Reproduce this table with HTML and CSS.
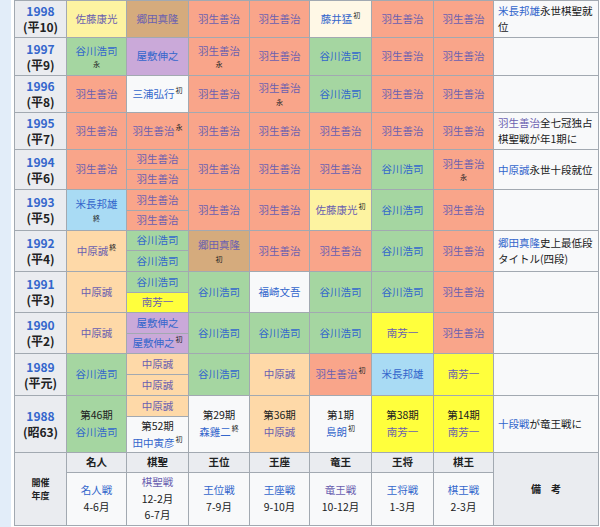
FILE: index.html
```html
<!DOCTYPE html>
<html lang="ja">
<head>
<meta charset="utf-8">
<title>タイトル保持者一覧</title>
<link rel="stylesheet" href="styles.css">
</head>
<body>
<div class="page">
  <div class="strip"></div>
  <div class="tbl">
    <!-- 1998 -->
    <div class="c yr"><a href="#">1998</a><span>(平10)</span></div>
    <div class="c st"><a class="v" href="#">佐藤康光</a></div>
    <div class="c gd"><a class="v" href="#">郷田真隆</a></div>
    <div class="c hb"><a class="v" href="#">羽生善治</a></div>
    <div class="c hb"><a class="v" href="#">羽生善治</a></div>
    <div class="c fj"><span><a href="#">藤井猛</a><sup>初</sup></span></div>
    <div class="c hb"><a class="v" href="#">羽生善治</a></div>
    <div class="c hb"><a class="v" href="#">羽生善治</a></div>
    <div class="c rm"><p><a href="#">米長邦雄</a>永世棋聖就<br>位</p></div>
    <!-- 1997 -->
    <div class="c yr"><a href="#">1997</a><span>(平9)</span></div>
    <div class="c tg"><a href="#">谷川浩司</a><small>永</small></div>
    <div class="c ys"><a href="#">屋敷伸之</a></div>
    <div class="c hb"><a class="v" href="#">羽生善治</a><small>永</small></div>
    <div class="c hb"><a class="v" href="#">羽生善治</a></div>
    <div class="c tg"><a href="#">谷川浩司</a></div>
    <div class="c hb"><a class="v" href="#">羽生善治</a></div>
    <div class="c hb"><a class="v" href="#">羽生善治</a></div>
    <div class="c rm"></div>
    <!-- 1996 -->
    <div class="c yr"><a href="#">1996</a><span>(平8)</span></div>
    <div class="c hb"><a class="v" href="#">羽生善治</a></div>
    <div class="c wh"><span><a href="#">三浦弘行</a><sup>初</sup></span></div>
    <div class="c hb"><a class="v" href="#">羽生善治</a></div>
    <div class="c hb"><a class="v" href="#">羽生善治</a><small>永</small></div>
    <div class="c tg"><a href="#">谷川浩司</a></div>
    <div class="c hb"><a class="v" href="#">羽生善治</a></div>
    <div class="c hb"><a class="v" href="#">羽生善治</a></div>
    <div class="c rm"></div>
    <!-- 1995 -->
    <div class="c yr"><a href="#">1995</a><span>(平7)</span></div>
    <div class="c hb"><a class="v" href="#">羽生善治</a></div>
    <div class="c hb"><span><a class="v" href="#">羽生善治</a><sup>永</sup></span></div>
    <div class="c hb"><a class="v" href="#">羽生善治</a></div>
    <div class="c hb"><a class="v" href="#">羽生善治</a></div>
    <div class="c hb"><a class="v" href="#">羽生善治</a></div>
    <div class="c hb"><a class="v" href="#">羽生善治</a></div>
    <div class="c hb"><a class="v" href="#">羽生善治</a></div>
    <div class="c rm"><p><a class="v" href="#">羽生善治</a>全七冠独占<br>棋聖戦が年1期に</p></div>
    <!-- 1994 -->
    <div class="c yr s2"><a href="#">1994</a><span>(平6)</span></div>
    <div class="c hb s2"><a class="v" href="#">羽生善治</a></div>
    <div class="c hb"><a class="v" href="#">羽生善治</a></div>
    <div class="c hb s2"><a class="v" href="#">羽生善治</a></div>
    <div class="c hb s2"><a class="v" href="#">羽生善治</a></div>
    <div class="c hb s2"><a class="v" href="#">羽生善治</a></div>
    <div class="c tg s2"><a href="#">谷川浩司</a></div>
    <div class="c hb s2"><a class="v" href="#">羽生善治</a><small>永</small></div>
    <div class="c rm s2"><p><a href="#">中原誠</a>永世十段就位</p></div>
    <div class="c hb"><a class="v" href="#">羽生善治</a></div>
    <!-- 1993 -->
    <div class="c yr s2"><a href="#">1993</a><span>(平5)</span></div>
    <div class="c yn s2"><a href="#">米長邦雄</a><small>終</small></div>
    <div class="c hb"><a class="v" href="#">羽生善治</a></div>
    <div class="c hb s2"><a class="v" href="#">羽生善治</a></div>
    <div class="c hb s2"><a class="v" href="#">羽生善治</a></div>
    <div class="c st s2"><span><a class="v" href="#">佐藤康光</a><sup>初</sup></span></div>
    <div class="c tg s2"><a href="#">谷川浩司</a></div>
    <div class="c hb s2"><a class="v" href="#">羽生善治</a></div>
    <div class="c rm s2"></div>
    <div class="c hb"><a class="v" href="#">羽生善治</a></div>
    <!-- 1992 -->
    <div class="c yr s2"><a href="#">1992</a><span>(平4)</span></div>
    <div class="c nk s2"><span><a class="v" href="#">中原誠</a><sup>終</sup></span></div>
    <div class="c tg"><a href="#">谷川浩司</a></div>
    <div class="c gd s2"><a class="v" href="#">郷田真隆</a><small>初</small></div>
    <div class="c hb s2"><a class="v" href="#">羽生善治</a></div>
    <div class="c hb s2"><a class="v" href="#">羽生善治</a></div>
    <div class="c tg s2"><a href="#">谷川浩司</a></div>
    <div class="c hb s2"><a class="v" href="#">羽生善治</a></div>
    <div class="c rm s2"><p><a href="#">郷田真隆</a>史上最低段<br>タイトル(四段)</p></div>
    <div class="c tg"><a href="#">谷川浩司</a></div>
    <!-- 1991 -->
    <div class="c yr s2"><a href="#">1991</a><span>(平3)</span></div>
    <div class="c nk s2"><a class="v" href="#">中原誠</a></div>
    <div class="c tg"><a href="#">谷川浩司</a></div>
    <div class="c tg s2"><a href="#">谷川浩司</a></div>
    <div class="c wh s2"><a href="#">福崎文吾</a></div>
    <div class="c tg s2"><a href="#">谷川浩司</a></div>
    <div class="c tg s2"><a href="#">谷川浩司</a></div>
    <div class="c hb s2"><a class="v" href="#">羽生善治</a></div>
    <div class="c rm s2"></div>
    <div class="c mn"><a class="v" href="#">南芳一</a></div>
    <!-- 1990 -->
    <div class="c yr s2"><a href="#">1990</a><span>(平2)</span></div>
    <div class="c nk s2"><a class="v" href="#">中原誠</a></div>
    <div class="c ys"><a href="#">屋敷伸之</a></div>
    <div class="c tg s2"><a href="#">谷川浩司</a></div>
    <div class="c tg s2"><a href="#">谷川浩司</a></div>
    <div class="c tg s2"><a href="#">谷川浩司</a></div>
    <div class="c mn s2"><a class="v" href="#">南芳一</a></div>
    <div class="c hb s2"><a class="v" href="#">羽生善治</a></div>
    <div class="c rm s2"></div>
    <div class="c ys"><span><a href="#">屋敷伸之</a><sup>初</sup></span></div>
    <!-- 1989 -->
    <div class="c yr s2"><a href="#">1989</a><span>(平元)</span></div>
    <div class="c tg s2"><a href="#">谷川浩司</a></div>
    <div class="c nk"><a class="v" href="#">中原誠</a></div>
    <div class="c tg s2"><a href="#">谷川浩司</a></div>
    <div class="c nk s2"><a class="v" href="#">中原誠</a></div>
    <div class="c hb s2"><span><a class="v" href="#">羽生善治</a><sup>初</sup></span></div>
    <div class="c yn s2"><a href="#">米長邦雄</a></div>
    <div class="c mn s2"><a class="v" href="#">南芳一</a></div>
    <div class="c rm s2"></div>
    <div class="c nk"><a class="v" href="#">中原誠</a></div>
    <!-- 1988 -->
    <div class="c yr s2"><a href="#">1988</a><span>(昭63)</span></div>
    <div class="c tg s2"><span>第46期</span><a href="#">谷川浩司</a></div>
    <div class="c nk"><a class="v" href="#">中原誠</a></div>
    <div class="c wh s2"><span>第29期</span><span><a href="#">森雞二</a><sup>終</sup></span></div>
    <div class="c nk s2"><span>第36期</span><a class="v" href="#">中原誠</a></div>
    <div class="c wh s2"><span>第1期</span><span><a href="#">島朗</a><sup>初</sup></span></div>
    <div class="c mn s2"><span>第38期</span><a class="v" href="#">南芳一</a></div>
    <div class="c mn s2"><span>第14期</span><a class="v" href="#">南芳一</a></div>
    <div class="c rm s2"><p><a href="#">十段戦</a>が竜王戦に</p></div>
    <div class="c wh"><span>第52期</span><span><a href="#">田中寅彦</a><sup>初</sup></span></div>
    <!-- header -->
    <div class="c hd s2 yrh"><span>開催</span><span>年度</span></div>
    <div class="c hd">名人</div>
    <div class="c hd">棋聖</div>
    <div class="c hd">王位</div>
    <div class="c hd">王座</div>
    <div class="c hd">竜王</div>
    <div class="c hd">王将</div>
    <div class="c hd">棋王</div>
    <div class="c hd s2 bk">備　考</div>
    <div class="c hl"><a href="#">名人戦</a><span>4-6月</span></div>
    <div class="c hl"><a class="v" href="#">棋聖戦</a><span>12-2月</span><span>6-7月</span></div>
    <div class="c hl"><a href="#">王位戦</a><span>7-9月</span></div>
    <div class="c hl"><a href="#">王座戦</a><span>9-10月</span></div>
    <div class="c hl"><a class="v" href="#">竜王戦</a><span>10-12月</span></div>
    <div class="c hl"><a href="#">王将戦</a><span>1-3月</span></div>
    <div class="c hl"><a href="#">棋王戦</a><span>2-3月</span></div>
  </div>
</div>
</body>
</html>
```

FILE: styles.css
```css
html, body {
  margin: 0;
  padding: 0;
  background: #ffffff;
}

body {
  font-family: "Noto Sans CJK JP", "Noto Sans", sans-serif;
  color: #202122;
  font-size: 10.5px;
}

.page {
  display: flex;
  align-items: flex-start;
  gap: 3px;
}

.strip {
  width: 11px;
  height: 527px;
  background: #e2edf9;
}

.tbl {
  display: grid;
  grid-template-columns: 51px 59px 61px 60px 59px 61px 61px 59px 104px;
  grid-template-rows: 36px 37px 36px 36px 19px 19px 20px 19px 19px 20px 20px 19px 20px 19px 20px 20px 20px 35px 19px 52px;
  gap: 1px;
  padding: 1px;
  background: #a2a9b1;
}

.c {
  display: flex;
  flex-direction: column;
  justify-content: center;
  align-items: center;
  text-align: center;
  line-height: 16.8px;
  white-space: nowrap;
  overflow: hidden;
}

.s2 {
  grid-row: span 2;
}

a {
  color: #3366cc;
  text-decoration: none;
}

a.v {
  color: #6a60b0;
}

small {
  font-size: 7px;
  line-height: 11px;
  display: block;
}

sup {
  font-size: 7px;
  line-height: 1;
  vertical-align: 5px;
  margin-left: 1px;
}

.yr {
  background: #eaecf0;
  font-weight: bold;
  font-size: 12px;
  line-height: 16px;
}

.hb { background: #f9a58a; }
.tg { background: #a5d6a1; }
.st { background: #fdf3a1; }
.gd { background: #d5ab7d; }
.ys { background: #caa9d9; }
.wh { background: #f8f9fa; }
.fj { background: #fff8e6; }
.yn { background: #a9dbf4; }
.nk { background: #fed9a8; }
.mn { background: #ffff3c; }

.rm {
  background: #f8f9fa;
  align-items: flex-start;
  text-align: left;
  padding-left: 4px;
  line-height: 16px;
}

.rm p {
  margin: 0;
}

.hd {
  background: #eaecf0;
  font-weight: bold;
}

.yrh {
  font-size: 9px;
  line-height: 13px;
}

.bk {
  font-size: 10px;
}

.hl {
  background: #f8f9fa;
}
```
